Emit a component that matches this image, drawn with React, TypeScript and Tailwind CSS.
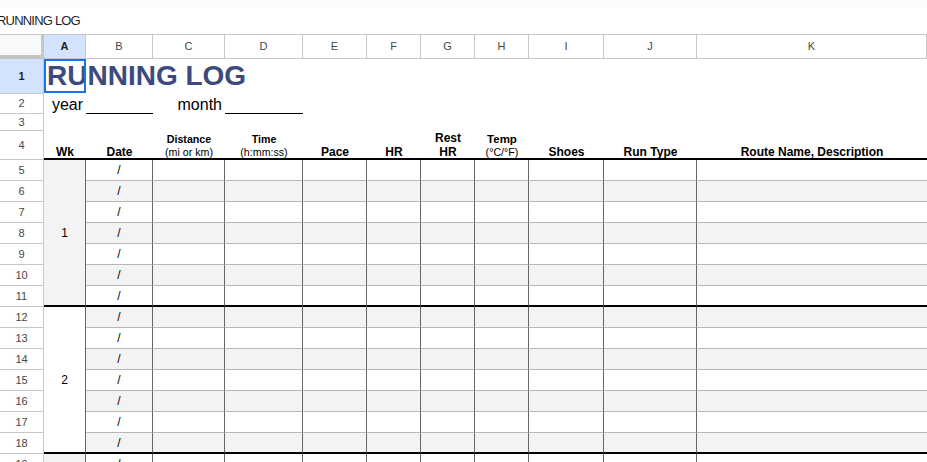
import React from "react";

const COLS = ["A", "B", "C", "D", "E", "F", "G", "H", "I", "J", "K"];
const WEEKS = [1, 2, 3];

function HeaderCell({ children, last = false }: { children: React.ReactNode; last?: boolean }) {
  return (
    <div
      className={`flex flex-col items-center justify-end border-b-2 border-black text-center text-black ${
        last ? "" : ""
      }`}
    >
      <div className="translate-y-[1px] flex flex-col items-center">{children}</div>
    </div>
  );
}

function RowNum({ n, active = false }: { n: number; active?: boolean }) {
  return (
    <div
      className={`flex items-center justify-center border-r border-b border-[#c7c7c7] text-[11px] ${
        active ? "bg-[#d3e3fd] font-bold text-[#1f1f1f]" : "bg-white text-[#444746]"
      }`}
    >
      {n}
    </div>
  );
}

export default function App() {
  return (
    <div className="h-[462px] w-[927px] overflow-hidden bg-white font-['Liberation_Sans',Arial,sans-serif]">
      {/* top strip + formula bar */}
      <div className="h-[7px] bg-[#f9fbfd]" />
      <div className="flex h-[28px] items-center border-b border-[#c4c7c5] bg-white">
        <span className="-ml-[3px] text-[13px] tracking-[-0.8px] text-[#1f1f1f]">RUNNING LOG</span>
      </div>

      <div className="grid grid-cols-[44px_42px_67px_72px_78px_64px_54px_54px_54px_75px_93px_1fr] grid-rows-[24px_35px_20px_17px_29px] auto-rows-[21px]">
        {/* column header row */}
        <div className="border-r-[3px] border-b-[4px] border-[#c4c7c5] bg-[#f8f9fa]" />
        {COLS.map((c) => (
          <div
            key={c}
            className={`flex items-center justify-center border-r border-b border-[#c7c7c7] text-[11px] ${
              c === "A" ? "bg-[#d3e3fd] font-bold text-[#1f1f1f]" : "bg-white text-[#444746]"
            }`}
          >
            {c}
          </div>
        ))}

        {/* row 1 */}
        <RowNum n={1} active />
        <div className="relative col-span-11 flex items-center pb-[2px] pl-[3px]">
          <div className="absolute left-0 top-0 h-[34px] w-[42px] border-2 border-[#1a73e8]" />
          <span className="text-[28px] font-bold leading-[28px] text-[#3c4a7d]">RUNNING LOG</span>
        </div>

        {/* row 2 */}
        <RowNum n={2} />
        <div className="flex items-end justify-end pb-[1px] pr-[3px] text-[16px] leading-[16px] text-black">year</div>
        <div className="border-b border-black" />
        <div className="flex items-end justify-end pb-[1px] pr-[3px] text-[16px] leading-[16px] text-black">month</div>
        <div className="border-b border-black" />
        <div className="col-span-7" />

        {/* row 3 */}
        <RowNum n={3} />
        <div className="col-span-11" />

        {/* row 4 - table headers */}
        <RowNum n={4} />
        <HeaderCell>
          <span className="text-[12px] font-bold leading-[14px]">Wk</span>
        </HeaderCell>
        <HeaderCell>
          <span className="text-[12px] font-bold leading-[14px]">Date</span>
        </HeaderCell>
        <HeaderCell>
          <span className="text-[10.67px] font-bold leading-[13px]">Distance</span>
          <span className="text-[10.67px] leading-[13px]">(mi or km)</span>
        </HeaderCell>
        <HeaderCell>
          <span className="text-[10.67px] font-bold leading-[13px]">Time</span>
          <span className="text-[10.67px] leading-[13px]">(h:mm:ss)</span>
        </HeaderCell>
        <HeaderCell>
          <span className="text-[12px] font-bold leading-[14px]">Pace</span>
        </HeaderCell>
        <HeaderCell>
          <span className="text-[12px] font-bold leading-[14px]">HR</span>
        </HeaderCell>
        <HeaderCell>
          <span className="text-[12px] font-bold leading-[14px]">Rest</span>
          <span className="text-[12px] font-bold leading-[14px]">HR</span>
        </HeaderCell>
        <HeaderCell>
          <span className="text-[11.5px] font-bold leading-[13px]">Temp</span>
          <span className="text-[10.67px] leading-[13px]">(°C/°F)</span>
        </HeaderCell>
        <HeaderCell>
          <span className="text-[12px] font-bold leading-[14px]">Shoes</span>
        </HeaderCell>
        <HeaderCell>
          <span className="text-[12px] font-bold leading-[14px]">Run Type</span>
        </HeaderCell>
        <HeaderCell last>
          <span className="text-[12px] font-bold leading-[14px]">Route Name, Description</span>
        </HeaderCell>

        {/* week blocks */}
        {WEEKS.map((wk, w) =>
          Array.from({ length: 7 }).map((_, d) => {
            const r = 5 + w * 7 + d;
            const stripe = r % 2 === 0 ? "bg-[#f3f3f3]" : "bg-white";
            const bottom = d === 6 ? "border-b-2 border-b-black" : "border-b border-b-[#b7b7b7]";
            return (
              <React.Fragment key={r}>
                <RowNum n={r} />
                {d === 0 && (
                  <div
                    className={`row-span-7 flex items-center justify-center border-r border-r-[#666666] border-b-2 border-b-black text-[12px] text-black ${
                      w % 2 === 0 ? "bg-[#f3f3f3]" : "bg-white"
                    }`}
                  >
                    {wk}
                  </div>
                )}
                <div
                  className={`flex items-center justify-center border-r border-r-[#666666] text-[12px] text-black ${stripe} ${bottom}`}
                >
                  /
                </div>
                {COLS.slice(2).map((c) => (
                  <div
                    key={c}
                    className={`${c === "K" ? "" : "border-r border-r-[#666666]"} ${stripe} ${bottom}`}
                  />
                ))}
              </React.Fragment>
            );
          })
        )}
      </div>
    </div>
  );
}
